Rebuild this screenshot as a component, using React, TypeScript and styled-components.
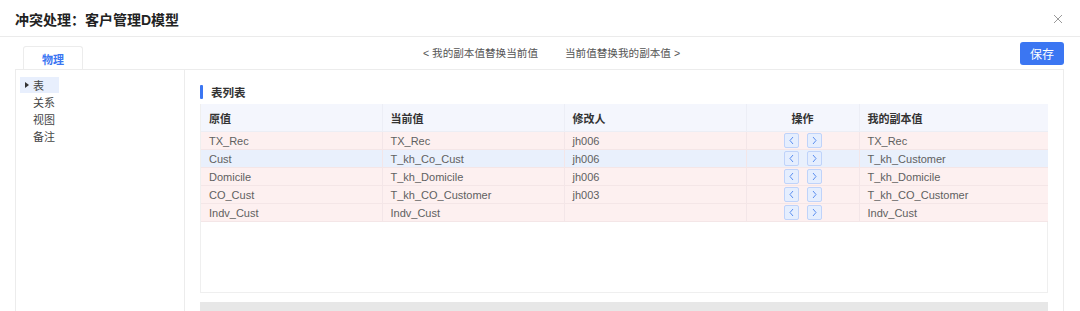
import styled, { createGlobalStyle } from "styled-components";

const GlobalStyle = createGlobalStyle`
    html, body {
        margin: 0;
        padding: 0;
        background: #fff;
        height: 311px;
        overflow: hidden;
    }
    body {
        font-family: "Liberation Sans", "Noto Sans CJK SC", sans-serif;
        color: #333;
    }
`;

const Dialog = styled.div`
    width: 1080px;
    height: 311px;
    display: flex;
    flex-direction: column;
    background: #fff;
`;

const Header = styled.header`
    height: 37px;
    flex-shrink: 0;
    display: flex;
    align-items: center;
    justify-content: space-between;
    padding: 2px 17px 0 15px;
    box-sizing: border-box;
    border-bottom: 1px solid #ebebeb;
`;

const Title = styled.h1`
    margin: 0;
    font-size: 14px;
    font-weight: 700;
    color: #222;
`;

const CloseBtn = styled.button`
    border: none;
    background: none;
    padding: 0;
    width: 10px;
    height: 10px;
    display: flex;
    cursor: pointer;
`;

const Toolbar = styled.div`
    height: 32px;
    flex-shrink: 0;
    display: flex;
    align-items: stretch;
    padding: 0 16px 0 23px;
`;

const Tab = styled.div`
    align-self: flex-end;
    width: 60px;
    height: 23px;
    box-sizing: border-box;
    border: 1px solid #ececec;
    border-bottom: none;
    border-radius: 3px 3px 0 0;
    display: flex;
    align-items: center;
    justify-content: center;
    padding-top: 1px;
    font-size: 11px;
    font-weight: 700;
    color: #3b76f2;
    background: #fff;
`;

const Links = styled.div`
    flex: 1;
    display: flex;
    justify-content: center;
    align-items: center;
    gap: 27px;
    padding-bottom: 2px;
`;

const Link = styled.span`
    font-size: 10.6px;
    color: #555;
    cursor: pointer;
`;

const SaveButton = styled.button`
    align-self: flex-start;
    margin-top: 5px;
    width: 44px;
    height: 23px;
    border: none;
    border-radius: 3px;
    background: #3b76f2;
    color: #fff;
    font-family: inherit;
    font-size: 12px;
    padding: 0;
`;

const Body = styled.div`
    flex: 1;
    display: flex;
    margin: 0 16px 0 15px;
    border-top: 1px solid #ececec;
    min-height: 0;
`;

const Sidebar = styled.aside`
    width: 170px;
    flex-shrink: 0;
    box-sizing: border-box;
    border-left: 1px solid #ececec;
    border-right: 1px solid #ececec;
    padding: 7px 0 0 4px;
`;

const TreeItem = styled.div<{ $active?: boolean }>`
    width: 39px;
    height: 16px;
    box-sizing: border-box;
    display: flex;
    align-items: center;
    padding-left: ${(p) => (p.$active ? "5px" : "13px")};
    gap: 4px;
    margin-bottom: 1px;
    font-size: 11px;
    color: #444;
    background: ${(p) => (p.$active ? "#e8effd" : "transparent")};
`;

const Caret = styled.span`
    width: 0;
    height: 0;
    border-top: 3px solid transparent;
    border-bottom: 3px solid transparent;
    border-left: 4px solid #333;
`;

const Main = styled.section`
    flex: 1;
    min-width: 0;
    border-right: 1px solid #ececec;
    padding: 14px 15px 0 15px;
    display: flex;
    flex-direction: column;
`;

const SectionTitle = styled.h2`
    margin: 0 0 5px;
    height: 15px;
    display: flex;
    align-items: center;
    gap: 8px;
    font-size: 11.5px;
    font-weight: 700;
    color: #333;

    &::before {
        content: "";
        width: 3px;
        height: 14px;
        background: #3b76f2;
        border-radius: 1px;
    }
`;

const TableBox = styled.div`
    height: 189px;
    flex-shrink: 0;
    box-sizing: border-box;
    border: 1px solid #efefef;
    border-top: none;
`;

const Table = styled.table`
    width: 100%;
    border-collapse: collapse;
    table-layout: fixed;
    font-size: 11px;
`;

const Th = styled.th<{ $center?: boolean }>`
    height: 27px;
    padding: 0 8px;
    text-align: ${(p) => (p.$center ? "center" : "left")};
    font-weight: 700;
    color: #333;
    background: #f4f6fd;
    border-left: 1px solid #eceef6;
    border-bottom: 1px solid #eceef5;

    &:first-child {
        border-left: none;
    }
`;

const Tr = styled.tr<{ $tone: "pink" | "blue" }>`
    background: ${(p) => (p.$tone === "blue" ? "#e9f0fc" : "#fdf0f0")};
`;

const Td = styled.td<{ $center?: boolean }>`
    height: 17px;
    padding: 0 8px;
    color: #606060;
    white-space: nowrap;
    overflow: hidden;
    text-align: ${(p) => (p.$center ? "center" : "left")};
    border-left: 1px solid #f3e6e8;
    border-bottom: 1px solid #f4e6e7;

    &:first-child {
        border-left: none;
    }
`;

const ActionGroup = styled.div`
    display: flex;
    justify-content: center;
    gap: 8px;
    padding-left: 1px;
`;

const ArrowBtn = styled.button`
    width: 15px;
    height: 15px;
    box-sizing: border-box;
    padding: 0;
    border: 1px solid #bfd3fa;
    border-radius: 2px;
    background: #e5eefe;
    display: flex;
    align-items: center;
    justify-content: center;
`;

const Scrollbar = styled.div`
    margin-top: 9px;
    height: 12px;
    background: #e7e7e7;
`;

type Row = {
    orig: string;
    current: string;
    user: string;
    mine: string;
    tone: "pink" | "blue";
};

const rows: Row[] = [
    { orig: "TX_Rec", current: "TX_Rec", user: "jh006", mine: "TX_Rec", tone: "pink" },
    { orig: "Cust", current: "T_kh_Co_Cust", user: "jh006", mine: "T_kh_Customer", tone: "blue" },
    { orig: "Domicile", current: "T_kh_Domicile", user: "jh006", mine: "T_kh_Domicile", tone: "pink" },
    { orig: "CO_Cust", current: "T_kh_CO_Customer", user: "jh003", mine: "T_kh_CO_Customer", tone: "pink" },
    { orig: "Indv_Cust", current: "Indv_Cust", user: "", mine: "Indv_Cust", tone: "pink" },
];

const columns = [181, 182, 182, 113, 189];

const Chevron = ({ dir }: { dir: "left" | "right" }) => (
    <svg width="7" height="9" viewBox="0 0 7 9">
        <path
            d={dir === "left" ? "M5 1 L2 4.5 L5 8" : "M2 1 L5 4.5 L2 8"}
            fill="none"
            stroke="#5b8ef0"
            strokeWidth="1"
        />
    </svg>
);

const App = () => {
    return (
        <Dialog>
            <GlobalStyle />
            <Header>
                <Title>冲突处理：客户管理D模型</Title>
                <CloseBtn>
                    <svg width="10" height="10" viewBox="0 0 10 10">
                        <path d="M1 1 L9 9 M9 1 L1 9" stroke="#9a9a9a" strokeWidth="1" />
                    </svg>
                </CloseBtn>
            </Header>

            <Toolbar>
                <Tab>物理</Tab>
                <Links>
                    <Link>&lt; 我的副本值替换当前值</Link>
                    <Link>当前值替换我的副本值 &gt;</Link>
                </Links>
                <SaveButton>保存</SaveButton>
            </Toolbar>

            <Body>
                <Sidebar>
                    <TreeItem $active>
                        <Caret />表
                    </TreeItem>
                    <TreeItem>关系</TreeItem>
                    <TreeItem>视图</TreeItem>
                    <TreeItem>备注</TreeItem>
                </Sidebar>

                <Main>
                    <SectionTitle>表列表</SectionTitle>
                    <TableBox>
                        <Table>
                            <colgroup>
                                {columns.map((w, i) => (
                                    <col key={i} style={{ width: w }} />
                                ))}
                            </colgroup>
                            <thead>
                                <tr>
                                    <Th>原值</Th>
                                    <Th>当前值</Th>
                                    <Th>修改人</Th>
                                    <Th $center>操作</Th>
                                    <Th>我的副本值</Th>
                                </tr>
                            </thead>
                            <tbody>
                                {rows.map((r) => (
                                    <Tr key={r.orig} $tone={r.tone}>
                                        <Td>{r.orig}</Td>
                                        <Td>{r.current}</Td>
                                        <Td>{r.user}</Td>
                                        <Td $center>
                                            <ActionGroup>
                                                <ArrowBtn>
                                                    <Chevron dir="left" />
                                                </ArrowBtn>
                                                <ArrowBtn>
                                                    <Chevron dir="right" />
                                                </ArrowBtn>
                                            </ActionGroup>
                                        </Td>
                                        <Td>{r.mine}</Td>
                                    </Tr>
                                ))}
                            </tbody>
                        </Table>
                    </TableBox>
                    <Scrollbar />
                </Main>
            </Body>
        </Dialog>
    );
};

export default App;
